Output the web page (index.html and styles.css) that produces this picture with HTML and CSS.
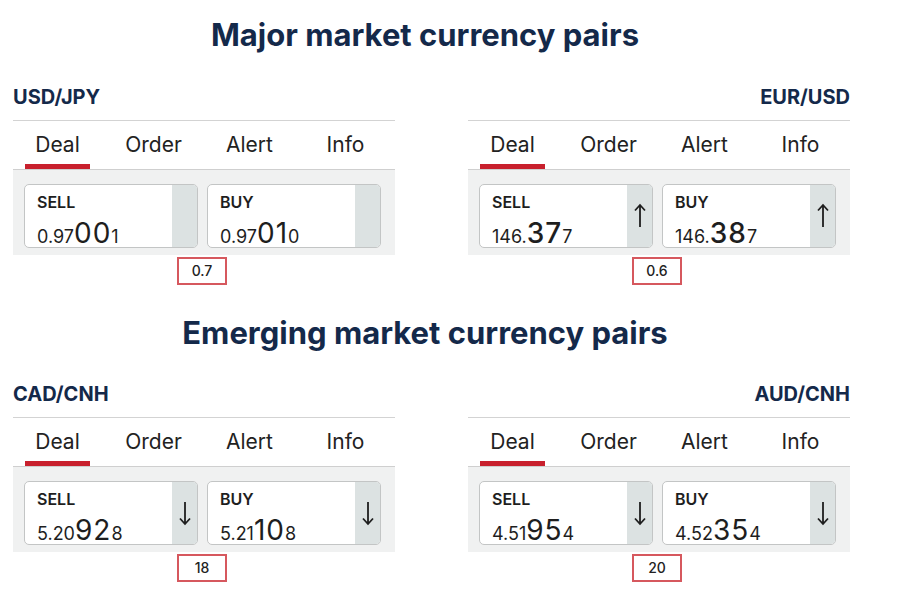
FILE: index.html
```html
<!DOCTYPE html>
<html lang="en">

<head>
    <meta charset="UTF-8">
    <title>Currency pairs</title>
    <link rel="stylesheet" href="styles.css">
</head>

<body>
    <main class="page">
        <!-- Major pairs -->
        <section class="market">
            <h2 class="market-title">Major market currency pairs</h2>
            <div class="pairs">
                <div class="pair">
                    <h3 class="pair-name">USD/JPY</h3>
                    <div class="tabs">
                        <span class="tab active">Deal</span>
                        <span class="tab">Order</span>
                        <span class="tab">Alert</span>
                        <span class="tab">Info</span>
                    </div>
                    <div class="quotes">
                        <div class="quote">
                            <div class="quote-main">
                                <div class="side">SELL</div>
                                <div class="price"><span class="lo">0.97</span><span class="hi">00</span><span class="lo">1</span></div>
                            </div>
                            <div class="trend"></div>
                        </div>
                        <div class="quote">
                            <div class="quote-main">
                                <div class="side">BUY</div>
                                <div class="price"><span class="lo">0.97</span><span class="hi">01</span><span class="lo">0</span></div>
                            </div>
                            <div class="trend"></div>
                        </div>
                    </div>
                    <div class="spread-row"><span class="spread">0.7</span></div>
                </div>

                <div class="pair pair-right">
                    <h3 class="pair-name">EUR/USD</h3>
                    <div class="tabs">
                        <span class="tab active">Deal</span>
                        <span class="tab">Order</span>
                        <span class="tab">Alert</span>
                        <span class="tab">Info</span>
                    </div>
                    <div class="quotes">
                        <div class="quote">
                            <div class="quote-main">
                                <div class="side">SELL</div>
                                <div class="price"><span class="lo">146.</span><span class="hi strong">37</span><span class="lo">7</span></div>
                            </div>
                            <div class="trend">
                                <svg class="arrow" viewBox="0 0 12 26"><path d="M6 24V2M1 7.5L6 2l5 5.5" /></svg>
                            </div>
                        </div>
                        <div class="quote">
                            <div class="quote-main">
                                <div class="side">BUY</div>
                                <div class="price"><span class="lo">146.</span><span class="hi strong">38</span><span class="lo">7</span></div>
                            </div>
                            <div class="trend">
                                <svg class="arrow" viewBox="0 0 12 26"><path d="M6 24V2M1 7.5L6 2l5 5.5" /></svg>
                            </div>
                        </div>
                    </div>
                    <div class="spread-row"><span class="spread">0.6</span></div>
                </div>
            </div>
        </section>

        <!-- Emerging pairs -->
        <section class="market market-second">
            <h2 class="market-title">Emerging market currency pairs</h2>
            <div class="pairs">
                <div class="pair">
                    <h3 class="pair-name">CAD/CNH</h3>
                    <div class="tabs">
                        <span class="tab active">Deal</span>
                        <span class="tab">Order</span>
                        <span class="tab">Alert</span>
                        <span class="tab">Info</span>
                    </div>
                    <div class="quotes">
                        <div class="quote">
                            <div class="quote-main">
                                <div class="side">SELL</div>
                                <div class="price"><span class="lo">5.20</span><span class="hi">92</span><span class="lo">8</span></div>
                            </div>
                            <div class="trend">
                                <svg class="arrow" viewBox="0 0 12 26"><path d="M6 2v22M1 18.5L6 24l5-5.5" /></svg>
                            </div>
                        </div>
                        <div class="quote">
                            <div class="quote-main">
                                <div class="side">BUY</div>
                                <div class="price"><span class="lo">5.21</span><span class="hi">10</span><span class="lo">8</span></div>
                            </div>
                            <div class="trend">
                                <svg class="arrow" viewBox="0 0 12 26"><path d="M6 2v22M1 18.5L6 24l5-5.5" /></svg>
                            </div>
                        </div>
                    </div>
                    <div class="spread-row"><span class="spread">18</span></div>
                </div>

                <div class="pair pair-right">
                    <h3 class="pair-name">AUD/CNH</h3>
                    <div class="tabs">
                        <span class="tab active">Deal</span>
                        <span class="tab">Order</span>
                        <span class="tab">Alert</span>
                        <span class="tab">Info</span>
                    </div>
                    <div class="quotes">
                        <div class="quote">
                            <div class="quote-main">
                                <div class="side">SELL</div>
                                <div class="price"><span class="lo">4.51</span><span class="hi">95</span><span class="lo">4</span></div>
                            </div>
                            <div class="trend">
                                <svg class="arrow" viewBox="0 0 12 26"><path d="M6 2v22M1 18.5L6 24l5-5.5" /></svg>
                            </div>
                        </div>
                        <div class="quote">
                            <div class="quote-main">
                                <div class="side">BUY</div>
                                <div class="price"><span class="lo">4.52</span><span class="hi">35</span><span class="lo">4</span></div>
                            </div>
                            <div class="trend">
                                <svg class="arrow" viewBox="0 0 12 26"><path d="M6 2v22M1 18.5L6 24l5-5.5" /></svg>
                            </div>
                        </div>
                    </div>
                    <div class="spread-row"><span class="spread">20</span></div>
                </div>
            </div>
        </section>
    </main>
</body>

</html>
```

FILE: styles.css
```css
body {
    margin: 0;
    background: #ffffff;
    font-family: Inter, "Noto Sans", sans-serif;
    color: #1e1e1e;
}

.page {
    width: 850px;
}

.market-title {
    margin: 16px 0 0;
    font-size: 31px;
    line-height: 38px;
    font-weight: 700;
    color: #14294a;
    text-align: center;
}

.market-second .market-title {
    margin-top: 29px;
}

.pairs {
    display: flex;
    justify-content: space-between;
    padding-left: 13px;
    margin-top: 32px;
}

.market-second .pairs {
    margin-top: 31px;
}

.pair {
    width: 382px;
}

.pair-name {
    margin: 0 0 12px;
    font-size: 20px;
    line-height: 22px;
    font-weight: 700;
    color: #14294a;
}

.pair-right .pair-name {
    text-align: right;
}

.tabs {
    display: flex;
    gap: 31px;
    padding: 12px 0 0 12px;
    border-top: 1px solid #d3d3d3;
    border-bottom: 1px solid #cfcfcf;
}

.tab {
    width: 65px;
    padding-bottom: 7px;
    border-bottom: 5px solid transparent;
    font-size: 21px;
    line-height: 24px;
    text-align: center;
    color: #222;
}

.tab.active {
    border-bottom-color: #c8202d;
}

.quotes {
    display: flex;
    gap: 9px;
    padding: 14px 0 7px 11px;
    background: #f0f1f1;
}

.quote {
    display: flex;
    width: 174px;
    height: 64px;
    box-sizing: border-box;
    border: 1px solid #c3c5c5;
    border-radius: 5px;
    background: #fff;
}

.quote-main {
    flex: 1;
    padding: 8px 0 0 12px;
}

.side {
    font-size: 16px;
    line-height: 18px;
    font-weight: 600;
    color: #1e1e1e;
}

.price {
    margin-top: 8px;
    font-size: 28px;
    line-height: 28px;
    color: #1e1e1e;
    white-space: nowrap;
}

.price .lo {
    font-size: 18px;
}

.price .hi {
    font-weight: 400;
    letter-spacing: 1px;
}

.price .hi.strong {
    font-weight: 500;
}

.trend {
    width: 25px;
    display: flex;
    align-items: center;
    justify-content: center;
    border-radius: 0 4px 4px 0;
    background: #dce2e2;
}

.arrow {
    width: 12px;
    height: 26px;
    fill: none;
    stroke: #1e1e1e;
    stroke-width: 1.8;
}

.spread-row {
    display: flex;
    justify-content: center;
    width: 370px;
    padding: 2px 0 0 4px;
}

.spread {
    width: 50px;
    height: 28px;
    box-sizing: border-box;
    border: 2px solid #d6585e;
    font-size: 14px;
    line-height: 24px;
    font-weight: 500;
    text-align: center;
    color: #222;
}
```
